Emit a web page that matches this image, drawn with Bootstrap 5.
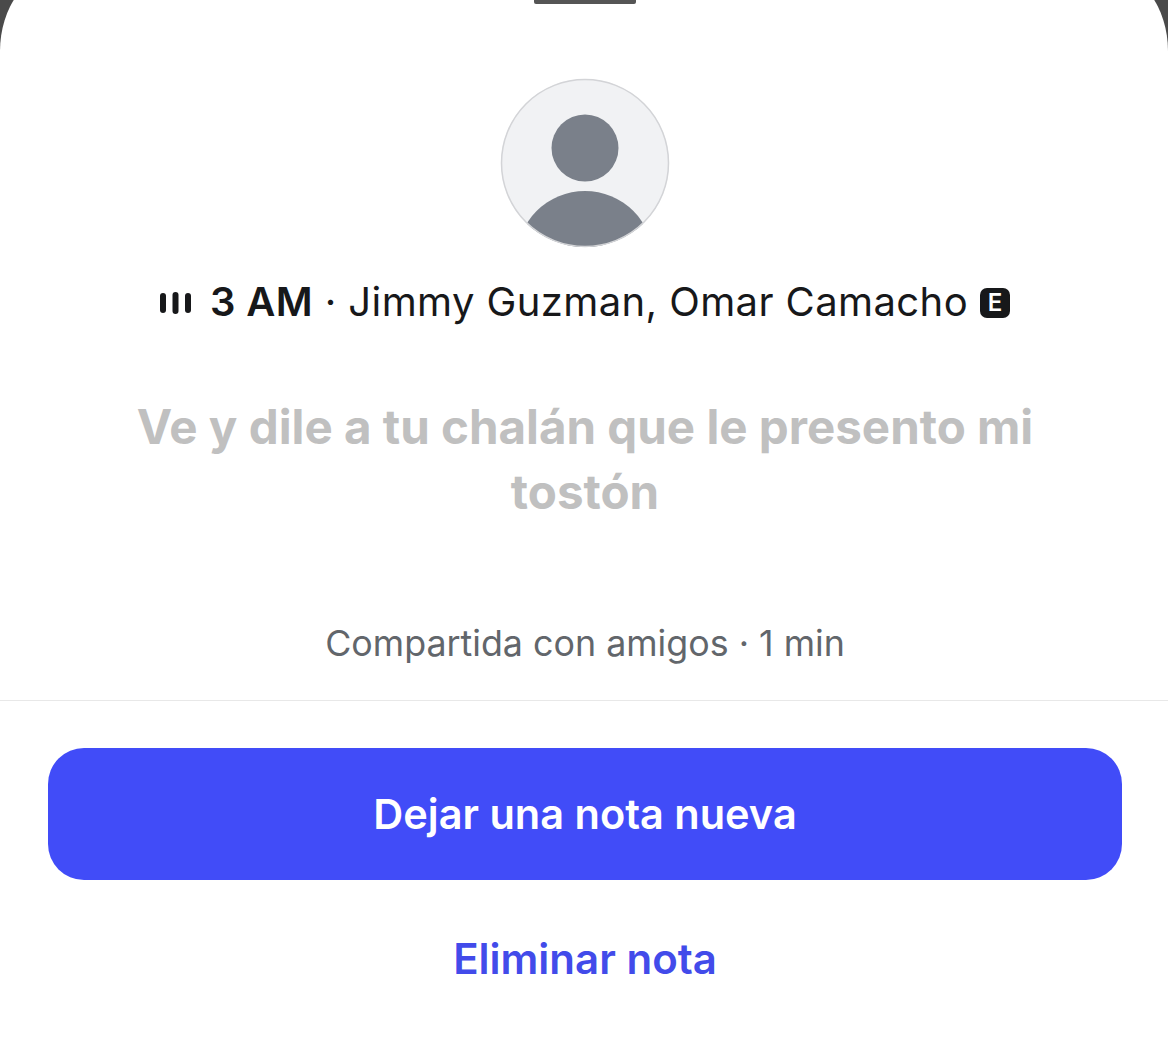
<!DOCTYPE html>
<html lang="es">
<head>
  <meta charset="UTF-8" />
  <meta name="viewport" content="width=device-width, initial-scale=1.0"/>
  <title>Nota</title>
  <link href="https://cdn.jsdelivr.net/npm/bootstrap@5.3.0/dist/css/bootstrap.min.css" rel="stylesheet" />
  <style>
    html, body {
      height: 100%;
    }

    body {
      background-color: #4a4a4a;
      font-family: Inter, "Liberation Sans", sans-serif;
      overflow: hidden;
    }

    .sheet {
      background: #fff;
      margin-top: -29px;
      height: 1087px;
      padding: 29px 0 0 2px;
      border-radius: 60px 60px 0 0 / 80px 80px 0 0;
    }

    .grabber {
      width: 102px;
      height: 4px;
      background: #555;
      border-radius: 0 0 2px 2px;
    }

    .avatar {
      display: block;
      width: 170px;
      height: 170px;
      margin-top: 74px;
    }

    .track-line {
      margin-top: 31px;
      height: 48px;
      font-size: 40px;
      letter-spacing: 0.4px;
      color: #17181a;
    }

    .track-line strong {
      font-weight: 600;
    }

    .track-text {
      margin-top: -2px;
    }

    .eq-icon {
      width: 31px;
      height: 22px;
      margin-right: 19px;
    }

    .explicit {
      width: 30px;
      height: 30px;
      margin-left: 12px;
      background: #17181a;
      color: #fff;
      border-radius: 7px;
      font-size: 24px;
      font-weight: 600;
      letter-spacing: 0;
    }

    .note-text {
      margin: 67px auto 0;
      width: 960px;
      font-size: 47.5px;
      line-height: 65px;
      font-weight: 700;
      color: #c0c0c0;
    }

    .shared {
      margin-top: 97px;
      font-size: 35.8px;
      line-height: 44px;
      color: #62666b;
    }

    .rule {
      margin: 35px 0 0 -2px;
      border-top: 1px solid #e8e8e8;
    }

    .actions {
      padding: 0 46px;
    }

    .btn-new {
      height: 132px;
      margin-top: 47px;
      font-size: 41.5px;
      font-weight: 600;
      color: #fff;
      background: #414cf8;
      border: 0;
      border-radius: 36px;
    }

    .btn-remove {
      margin-top: 54px;
      font-size: 42px;
      line-height: 50px;
      font-weight: 600;
      color: #424bea;
      border: 0;
      padding: 0;
    }
  </style>
</head>
<body>

  <div class="sheet d-flex flex-column align-items-stretch text-center">
    <div class="grabber mx-auto"></div>

    <svg class="avatar mx-auto" viewBox="0 0 170 170" role="img" aria-label="Avatar">
      <defs>
        <clipPath id="avatar-clip"><circle cx="85" cy="85" r="84"/></clipPath>
      </defs>
      <circle cx="85" cy="85" r="84" fill="#f1f2f4"/>
      <g clip-path="url(#avatar-clip)" fill="#7a808a">
        <circle cx="85" cy="70" r="33.5"/>
        <circle cx="85" cy="181.5" r="68.5"/>
      </g>
      <circle cx="85" cy="85" r="83.5" fill="none" stroke="#d3d4d7" stroke-width="1.5"/>
    </svg>

    <div class="track-line d-flex justify-content-center align-items-center">
      <svg class="eq-icon" viewBox="0 0 31 22" aria-hidden="true">
        <rect x="0" y="1" width="6" height="20" rx="3" fill="#17181a"/>
        <rect x="12.5" y="0" width="6" height="22" rx="3" fill="#17181a"/>
        <rect x="25" y="1" width="6" height="20" rx="3" fill="#17181a"/>
      </svg>
      <span class="track-text"><strong>3 AM</strong> · Jimmy Guzman, Omar Camacho</span>
      <span class="explicit d-inline-flex align-items-center justify-content-center">E</span>
    </div>

    <p class="note-text">Ve y dile a tu chalán que le presento mi tostón</p>

    <div class="shared">Compartida con amigos · 1 min</div>
    <div class="rule"></div>

    <div class="actions d-flex flex-column">
      <button type="button" class="btn btn-new">Dejar una nota nueva</button>
      <button type="button" class="btn btn-remove">Eliminar nota</button>
    </div>
  </div>

</body>
</html>
